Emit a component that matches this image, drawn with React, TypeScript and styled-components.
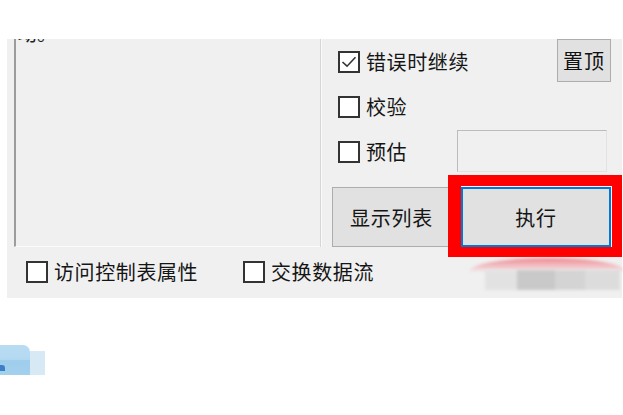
import React from "react";
import styled, { createGlobalStyle } from "styled-components";

//== Styling ==//
const GlobalStyle = createGlobalStyle`
  html, body {
    margin: 0;
    background: #ffffff;
  }
  body {
    font-family: "Noto Sans CJK SC", "Noto Sans", sans-serif;
    color: #111;
  }
`;

const Page = styled.div`
  width: 623px;
  height: 415px;
  padding-top: 39px;
  box-sizing: border-box;
  overflow: hidden;
`;

const Panel = styled.div`
  position: relative;
  width: 615px;
  height: 259px;
  margin-left: 7px;
  background: #f0f0f0;
  display: flex;
  flex-direction: column;
`;

const TopArea = styled.div`
  display: grid;
  grid-template-columns: 306px 1fr;
  height: 208px;
  padding-left: 7px;
`;

const TextBox = styled.div`
  overflow: hidden;
  border-left: 2px solid #9c9c9c;
  border-bottom: 1px solid #fbfbfb;
  background: #f0f0f0;
  padding-left: 1px;
`;

const ClippedText = styled.div`
  font-size: 20px;
  line-height: 24px;
  margin-top: -18px;
  color: #222;
`;

const Options = styled.div`
  display: flex;
  flex-direction: column;
  border-left: 1px solid #d6d6d6;
  box-shadow: inset 1px 0 0 #fafafa;
  padding-left: 17px;
`;

const OptionRow = styled.div`
  height: 45px;
  display: flex;
  align-items: center;
  justify-content: space-between;
`;

const CheckLabel = styled.label`
  display: flex;
  align-items: center;
  gap: 6px;
  font-size: 20px;
  letter-spacing: 0.6px;
  line-height: 1;
  color: #151515;
  white-space: nowrap;
`;

const Box = styled.span`
  width: 22px;
  height: 22px;
  box-sizing: border-box;
  border: 2px solid #333333;
  background: #ffffff;
  display: inline-flex;
  align-items: center;
  justify-content: center;
`;

const SmallButton = styled.div`
  align-self: flex-start;
  width: 54px;
  height: 43px;
  margin-right: 11px;
  box-sizing: border-box;
  border: 1px solid #adadad;
  background: #e1e1e1;
  display: flex;
  align-items: center;
  justify-content: center;
  font-size: 20px;
  letter-spacing: 1px;
`;

const ValueInput = styled.div`
  align-self: flex-start;
  margin-top: 1px;
  margin-right: 15px;
  width: 150px;
  height: 42px;
  box-sizing: border-box;
  border: 1px solid #bcbcbc;
  border-right-color: #e2e2e2;
  border-bottom-color: #e2e2e2;
  background: #f0f0f0;
`;

const ButtonRow = styled.div`
  display: flex;
  gap: 10px;
  margin-top: 13px;
  margin-left: -6px;
  height: 60px;
`;

const Button = styled.div<{ $width: number; $focused?: boolean }>`
  width: ${(p) => p.$width}px;
  height: 60px;
  box-sizing: border-box;
  border: ${(p) => (p.$focused ? "2px solid #0078d7" : "1px solid #adadad")};
  background: #e1e1e1;
  display: flex;
  align-items: center;
  justify-content: center;
  font-size: 20px;
  letter-spacing: 0.8px;
  color: #151515;
`;

// red annotation frame drawn over the execute button
const Highlight = styled.div`
  position: relative;
  &::after {
    content: "";
    position: absolute;
    left: -13px;
    top: -12px;
    right: -11px;
    bottom: -10px;
    border-style: solid;
    border-color: #ff0000;
    border-width: 11px 10px 10px 13px;
    pointer-events: none;
  }
`;

const BottomBar = styled.div`
  flex: 1;
  display: grid;
  grid-template-columns: 217px auto;
  align-items: center;
  padding-left: 19px;
  padding-bottom: 1px;
`;

// blurred watermark smudge under the red frame
const Smudge = styled.div`
  position: absolute;
  left: 458px;
  top: 219px;
  width: 157px;
  height: 44px;
  pointer-events: none;
  &::before {
    content: "";
    position: absolute;
    left: 4px;
    right: -4px;
    top: 0;
    height: 14px;
    border-radius: 50% 50% 0 0 / 100% 100% 0 0;
    background: linear-gradient(
      180deg,
      rgba(236, 100, 110, 0.75),
      rgba(242, 150, 158, 0.55) 55%,
      rgba(240, 210, 212, 0.1) 100%
    );
    filter: blur(1.5px);
  }
  &::after {
    content: "";
    position: absolute;
    left: 20px;
    top: 12px;
    width: 135px;
    height: 20px;
    background: linear-gradient(
      90deg,
      #e2e2e2 0 24%,
      #c9c9c9 24% 52%,
      #d4d4d4 52% 74%,
      #dcdcdc 74% 100%
    );
    filter: blur(1.5px);
  }
`;

const Thumb = styled.div`
  display: flex;
  align-items: flex-end;
  margin-top: 47px;
  height: 30px;
`;

const ThumbMain = styled.div`
  position: relative;
  width: 30px;
  height: 30px;
  border-top-right-radius: 7px;
  background: linear-gradient(180deg, #b9dcf2 0%, #b3d9f1 48%, #9fcdec 52%, #a3d0ed 100%);
  filter: blur(0.4px);
`;

const ThumbMark = styled.span`
  position: absolute;
  left: 0;
  top: 20px;
  width: 5px;
  height: 6px;
  background: #3d7fc4;
  border-radius: 0 3px 0 0;
`;

const ThumbSide = styled.div`
  width: 15px;
  height: 24px;
  background: #d8e9f6;
`;

//== Component ==//
interface CheckProps {
  label: string;
  checked?: boolean;
}

const Check: React.FC<CheckProps> = ({ label, checked }) => (
  <CheckLabel>
    <Box>
      {checked && (
        <svg width="18" height="18" viewBox="0 0 18 18">
          <polyline points="2.5,9 7,13.2 15.5,4.2" fill="none" stroke="#333" strokeWidth="1.6" />
        </svg>
      )}
    </Box>
    {label}
  </CheckLabel>
);

const App: React.FC = () => {
  return (
    <>
      <GlobalStyle />
      <Page>
        <Panel>
          <TopArea>
            <TextBox>
              <ClippedText>动。</ClippedText>
            </TextBox>
            <Options>
              <OptionRow>
                <Check label="错误时继续" checked />
                <SmallButton>置顶</SmallButton>
              </OptionRow>
              <OptionRow>
                <Check label="校验" />
              </OptionRow>
              <OptionRow>
                <Check label="预估" />
                <ValueInput />
              </OptionRow>
              <ButtonRow>
                <Button $width={119}>显示列表</Button>
                <Highlight>
                  <Button $width={150} $focused>
                    执行
                  </Button>
                </Highlight>
              </ButtonRow>
            </Options>
          </TopArea>
          <BottomBar>
            <Check label="访问控制表属性" />
            <Check label="交换数据流" />
          </BottomBar>
          <Smudge />
        </Panel>
        <Thumb>
          <ThumbMain>
            <ThumbMark />
          </ThumbMain>
          <ThumbSide />
        </Thumb>
      </Page>
    </>
  );
};

export default App;
